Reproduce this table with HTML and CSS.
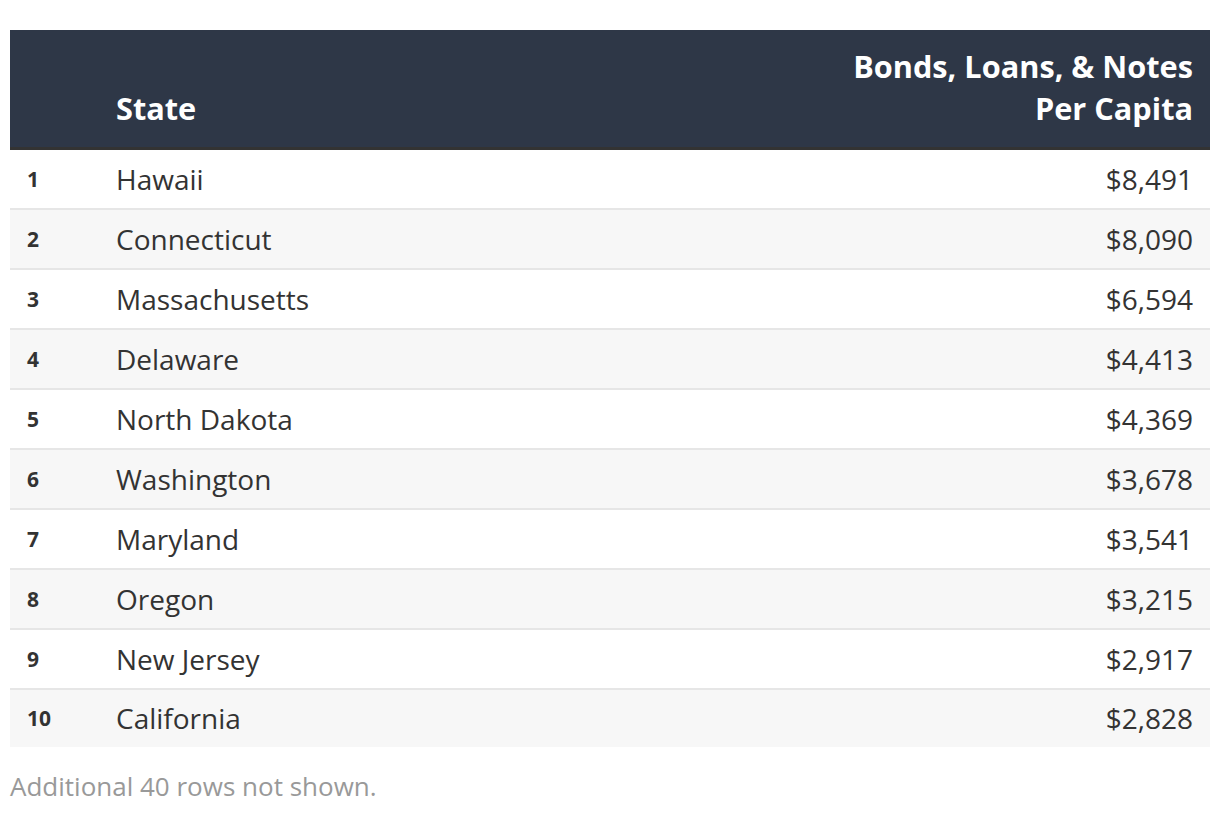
FILE: index.html
```html
<!DOCTYPE html>
<html>
<head>
<meta charset="utf-8">
<link rel="stylesheet" href="styles.css">
</head>
<body>
<div class="wrap">
  <table class="tbl">
    <thead>
      <tr>
        <th class="rank"></th>
        <th class="state">State</th>
        <th class="val">Bonds, Loans, &amp; Notes<br>Per Capita</th>
      </tr>
    </thead>
    <tbody>
      <tr><td class="rank">1</td><td class="state">Hawaii</td><td class="val">$8,491</td></tr>
      <tr><td class="rank">2</td><td class="state">Connecticut</td><td class="val">$8,090</td></tr>
      <tr><td class="rank">3</td><td class="state">Massachusetts</td><td class="val">$6,594</td></tr>
      <tr><td class="rank">4</td><td class="state">Delaware</td><td class="val">$4,413</td></tr>
      <tr><td class="rank">5</td><td class="state">North Dakota</td><td class="val">$4,369</td></tr>
      <tr><td class="rank">6</td><td class="state">Washington</td><td class="val">$3,678</td></tr>
      <tr><td class="rank">7</td><td class="state">Maryland</td><td class="val">$3,541</td></tr>
      <tr><td class="rank">8</td><td class="state">Oregon</td><td class="val">$3,215</td></tr>
      <tr><td class="rank">9</td><td class="state">New Jersey</td><td class="val">$2,917</td></tr>
      <tr><td class="rank">10</td><td class="state">California</td><td class="val">$2,828</td></tr>
    </tbody>
  </table>
  <p class="note">Additional 40 rows not shown.</p>
</div>
</body>
</html>
```
FILE: styles.css
```css
html, body {
  margin: 0;
  padding: 0;
  background: #fff;
}
body {
  font-family: "Open Sans", "Liberation Sans", sans-serif;
  color: #333;
}
.wrap {
  padding: 30px 10px 0 10px;
}
.tbl {
  width: 100%;
  border-collapse: collapse;
  table-layout: fixed;
}
.tbl thead tr {
  background: #2e3747;
  border-bottom: 3px solid #333;
}
.tbl th {
  color: #fff;
  font-weight: 700;
  font-size: 30.7px;
  line-height: 42px;
  padding: 15px 17px 18px 17px;
  vertical-align: bottom;
  text-align: left;
}
.tbl th.rank, .tbl td.rank {
  width: 55px;
}
.tbl th.val, .tbl td.val {
  text-align: right;
  width: 500px;
}
.tbl tbody tr {
  height: 60px;
  border-bottom: 2px solid #e6e6e6;
}
.tbl tbody tr:nth-child(even) {
  background: #f7f7f7;
}
.tbl tbody tr:last-child {
  border-bottom: none;
  height: 58px;
}
.tbl td {
  padding: 0 17px;
  font-size: 28px;
  color: #333;
  vertical-align: middle;
}
.tbl td.rank {
  font-size: 21px;
  font-weight: 700;
}
.note {
  margin: 21px 0 0 0;
  font-size: 26px;
  color: #999;
}
```
